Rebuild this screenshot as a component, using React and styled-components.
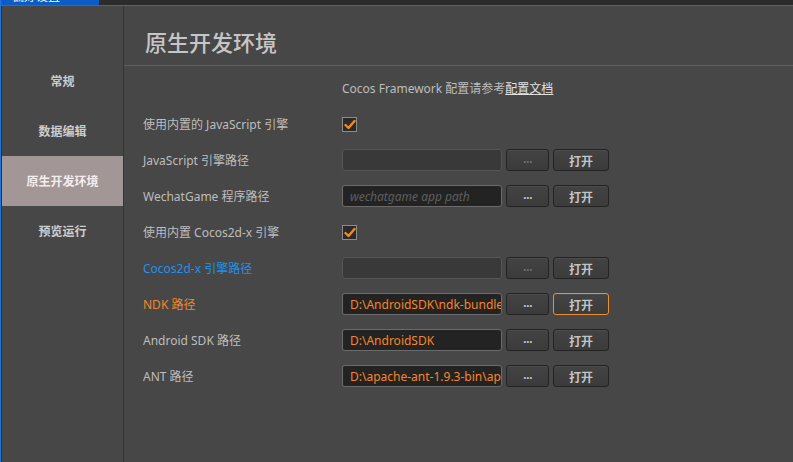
import React from "react";
import styled, { createGlobalStyle } from "styled-components";

const GlobalStyle = createGlobalStyle`
  html, body { margin: 0; padding: 0; background: #474747; overflow: hidden; }
  body { font-family: "Noto Sans", "Noto Sans CJK SC", sans-serif; }
  * { box-sizing: border-box; }
`;

const Window = styled.div`
  width: 793px;
  height: 462px;
  display: flex;
  flex-direction: column;
  background: #474747;
  border-left: 1px solid #2277de;
`;

const TopStrip = styled.div`
  height: 6px;
  flex: none;
  display: flex;
  background: #2c2c2c;
  border-bottom: 1px solid #616161;
`;

const TitleTab = styled.div`
  width: 98px;
  height: 5px;
  background: #0b5cc5;
  overflow: hidden;
  padding-left: 11px;
`;

const TabText = styled.span`
  display: block;
  margin-top: -10px;
  font-size: 12px;
  line-height: 14px;
  color: #ffffff;
`;

const Body = styled.div`
  flex: 1;
  display: flex;
  min-height: 0;
`;

const Sidebar = styled.nav`
  width: 123px;
  flex: none;
  display: flex;
  flex-direction: column;
  padding-top: 50px;
  border-left: 1px solid #2e2e2e;
  border-right: 1px solid #353535;
`;

const NavItem = styled.div`
  height: 50px;
  display: flex;
  align-items: center;
  justify-content: center;
  font-size: 12px;
  font-weight: 700;
  color: ${(p) => (p.$active ? "#f3eded" : "#cdcdcd")};
  background: ${(p) => (p.$active ? "#a39696" : "transparent")};
`;

const Main = styled.main`
  flex: 1;
  display: flex;
  flex-direction: column;
`;

const Header = styled.header`
  height: 60px;
  flex: none;
  display: flex;
  align-items: center;
  padding: 11px 0 0 21px;
  border-bottom: 1px solid #5f5f5f;
`;

const Title = styled.h1`
  margin: 0;
  font-size: 22px;
  font-weight: 500;
  line-height: 1;
  color: #c6c6c6;
  font-family: "Noto Sans CJK SC", sans-serif;
`;

const Form = styled.div`
  display: grid;
  grid-template-columns: 199px auto;
  grid-auto-rows: 36px;
  padding: 4px 0 0 19px;
  align-items: center;
`;

const Label = styled.div`
  font-size: 12px;
  color: ${(p) => p.$color || "#bdbdbd"};
`;

const Note = styled.div`
  grid-column: 2;
  font-size: 12px;
  color: #bdbdbd;
`;

const DocLink = styled.span`
  color: #e2e2e2;
  text-decoration: underline;
`;

const Controls = styled.div`
  display: flex;
  align-items: center;
  gap: 4px;
`;

const Check = styled.div`
  width: 15px;
  height: 15px;
  border: 1px solid #8c8c8c;
  background: #2a2a2a;
  display: flex;
  align-items: center;
  justify-content: center;
`;

const Input = styled.div`
  width: 160px;
  height: 22px;
  border-radius: 3px;
  border: 1px solid ${(p) => (p.$disabled ? "#555555" : "#6b6b6b")};
  background: ${(p) => (p.$disabled ? "#393939" : "#232323")};
  padding: 0 7px;
  display: flex;
  align-items: center;
  overflow: hidden;
  white-space: nowrap;
  font-size: 12px;
  color: #f5862a;
`;

const Placeholder = styled.span`
  font-style: italic;
  color: #5f5f5f;
`;

const Button = styled.div`
  width: ${(p) => p.$w}px;
  height: 22px;
  border-radius: 3px;
  border: 1px solid ${(p) => (p.$focus ? "#ee8e2c" : "#232323")};
  background: linear-gradient(#434343, #3b3b3b);
  box-shadow: inset 0 1px 0 rgba(255, 255, 255, 0.05);
  display: flex;
  align-items: center;
  justify-content: center;
  font-size: 12px;
  font-weight: 700;
  color: ${(p) => (p.$dim ? "#6e6e6e" : "#c4c4c4")};
  font-family: "Noto Sans CJK SC", sans-serif;
`;

const Dots = styled.span`
  font-size: 11px;
  letter-spacing: -0.5px;
  line-height: 1;
  margin-top: -3px;
`;

const CheckMark = () => (
  <svg width="12" height="11" viewBox="0 0 12 11">
    <path
      d="M1.5 6 L4.5 9 L10.5 2"
      fill="none"
      stroke="#f28a1e"
      strokeWidth="2.4"
      strokeLinecap="round"
      strokeLinejoin="round"
    />
  </svg>
);

const PathControls = ({ value, placeholder, disabled, focus }) => (
  <Controls>
    <Input $disabled={disabled}>
      {value ? value : placeholder ? <Placeholder>{placeholder}</Placeholder> : null}
    </Input>
    <Button $w={43} $dim={disabled}>
      <Dots>...</Dots>
    </Button>
    <Button $w={56} $focus={focus}>
      打开
    </Button>
  </Controls>
);

const navItems = ["常规", "数据编辑", "原生开发环境", "预览运行"];

export default function App() {
  return (
    <>
      <GlobalStyle />
      <Window>
        <TopStrip>
          <TitleTab>
            <TabText>偏好设置</TabText>
          </TitleTab>
        </TopStrip>
        <Body>
          <Sidebar>
            {navItems.map((n) => (
              <NavItem key={n} $active={n === "原生开发环境"}>
                {n}
              </NavItem>
            ))}
          </Sidebar>
          <Main>
            <Header>
              <Title>原生开发环境</Title>
            </Header>
            <Form>
              <Note>
                Cocos Framework 配置请参考<DocLink>配置文档</DocLink>
              </Note>

              <Label>使用内置的 JavaScript 引擎</Label>
              <Controls>
                <Check>
                  <CheckMark />
                </Check>
              </Controls>

              <Label>JavaScript 引擎路径</Label>
              <PathControls disabled />

              <Label>WechatGame 程序路径</Label>
              <PathControls placeholder="wechatgame app path" />

              <Label>使用内置 Cocos2d-x 引擎</Label>
              <Controls>
                <Check>
                  <CheckMark />
                </Check>
              </Controls>

              <Label $color="#2191ee">Cocos2d-x 引擎路径</Label>
              <PathControls disabled />

              <Label $color="#f0872c">NDK 路径</Label>
              <PathControls value="D:\AndroidSDK\ndk-bundle" focus />

              <Label>Android SDK 路径</Label>
              <PathControls value="D:\AndroidSDK" />

              <Label>ANT 路径</Label>
              <PathControls value="D:\apache-ant-1.9.3-bin\apache-ant-1.9.3" />
            </Form>
          </Main>
        </Body>
      </Window>
    </>
  );
}
